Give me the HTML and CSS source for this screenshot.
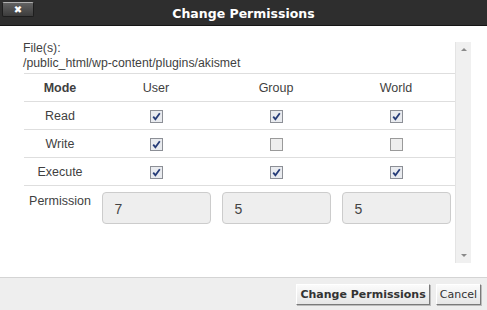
FILE: index.html
```html
<!DOCTYPE html>
<html lang="en">
<head>
    <meta charset="UTF-8">
    <title>Change Permissions</title>
    <link rel="stylesheet" href="styles.css">
</head>
<body>
    <div class="dialog">
        <div class="titlebar">
            <div class="close-wrap">
                <button class="close-btn" type="button">&#x2716;</button>
            </div>
            <div class="title">Change Permissions</div>
            <div></div>
        </div>

        <div class="content">
            <div class="scroll-area">
                <div class="files">
                    <div>File(s):</div>
                    <div>/public_html/wp-content/plugins/akismet</div>
                </div>

                <table class="perms">
                    <colgroup>
                        <col class="col-mode">
                        <col class="col-who">
                        <col class="col-who">
                        <col class="col-who">
                    </colgroup>
                    <tr>
                        <th>Mode</th>
                        <td>User</td>
                        <td>Group</td>
                        <td>World</td>
                    </tr>
                    <tr>
                        <td>Read</td>
                        <td><span class="cb on"><svg width="13" height="13" viewBox="0 0 13 13"><rect x="0.5" y="0.5" width="12" height="12" fill="#e9ebef" stroke="#8c8f96"/><path d="M3.2 6.6 L5.4 9.2 L9.8 3.2" fill="none" stroke="#263c78" stroke-width="1.8"/></svg></span></td>
                        <td><span class="cb on"><svg width="13" height="13" viewBox="0 0 13 13"><rect x="0.5" y="0.5" width="12" height="12" fill="#e9ebef" stroke="#8c8f96"/><path d="M3.2 6.6 L5.4 9.2 L9.8 3.2" fill="none" stroke="#263c78" stroke-width="1.8"/></svg></span></td>
                        <td><span class="cb on"><svg width="13" height="13" viewBox="0 0 13 13"><rect x="0.5" y="0.5" width="12" height="12" fill="#e9ebef" stroke="#8c8f96"/><path d="M3.2 6.6 L5.4 9.2 L9.8 3.2" fill="none" stroke="#263c78" stroke-width="1.8"/></svg></span></td>
                    </tr>
                    <tr>
                        <td>Write</td>
                        <td><span class="cb on"><svg width="13" height="13" viewBox="0 0 13 13"><rect x="0.5" y="0.5" width="12" height="12" fill="#e9ebef" stroke="#8c8f96"/><path d="M3.2 6.6 L5.4 9.2 L9.8 3.2" fill="none" stroke="#263c78" stroke-width="1.8"/></svg></span></td>
                        <td><span class="cb"><svg width="13" height="13" viewBox="0 0 13 13"><rect x="0.5" y="0.5" width="12" height="12" fill="#eeeeee" stroke="#9a9a9a"/></svg></span></td>
                        <td><span class="cb"><svg width="13" height="13" viewBox="0 0 13 13"><rect x="0.5" y="0.5" width="12" height="12" fill="#eeeeee" stroke="#9a9a9a"/></svg></span></td>
                    </tr>
                    <tr>
                        <td>Execute</td>
                        <td><span class="cb on"><svg width="13" height="13" viewBox="0 0 13 13"><rect x="0.5" y="0.5" width="12" height="12" fill="#e9ebef" stroke="#8c8f96"/><path d="M3.2 6.6 L5.4 9.2 L9.8 3.2" fill="none" stroke="#263c78" stroke-width="1.8"/></svg></span></td>
                        <td><span class="cb on"><svg width="13" height="13" viewBox="0 0 13 13"><rect x="0.5" y="0.5" width="12" height="12" fill="#e9ebef" stroke="#8c8f96"/><path d="M3.2 6.6 L5.4 9.2 L9.8 3.2" fill="none" stroke="#263c78" stroke-width="1.8"/></svg></span></td>
                        <td><span class="cb on"><svg width="13" height="13" viewBox="0 0 13 13"><rect x="0.5" y="0.5" width="12" height="12" fill="#e9ebef" stroke="#8c8f96"/><path d="M3.2 6.6 L5.4 9.2 L9.8 3.2" fill="none" stroke="#263c78" stroke-width="1.8"/></svg></span></td>
                    </tr>
                    <tr class="perm-row">
                        <td class="perm-label">Permission</td>
                        <td><div class="perm-box">7</div></td>
                        <td><div class="perm-box">5</div></td>
                        <td><div class="perm-box">5</div></td>
                    </tr>
                </table>
            </div>

            <div class="scrollbar">
                <span class="arrow up"></span>
                <span class="arrow down"></span>
            </div>
        </div>

        <div class="footer">
            <button type="button" class="btn btn-main">Change Permissions</button>
            <button type="button" class="btn">Cancel</button>
        </div>
    </div>
</body>
</html>
```

FILE: styles.css
```css
body {
    margin: 0;
    font-family: 'Liberation Sans', Arial, sans-serif;
    background: #ffffff;
}
.dialog {
    width: 487px;
    height: 310px;
    display: flex;
    flex-direction: column;
    overflow: hidden;
}
.titlebar {
    height: 25px;
    background: #2e2e2e;
    border-bottom: 1px solid #151515;
    display: grid;
    grid-template-columns: 1fr auto 1fr;
    align-items: center;
}
.close-wrap {
    align-self: start;
    padding: 2px 0 0 2px;
}
.close-btn {
    display: block;
    width: 32px;
    height: 15px;
    padding: 0;
    border: 1px solid #1e1e1e;
    border-top: 1px solid #b0b0b0;
    border-radius: 2px;
    background: linear-gradient(#626262, #3c3c3c);
    color: #ffffff;
    font-size: 10px;
    line-height: 13px;
    font-family: 'DejaVu Sans', sans-serif;
    font-weight: bold;
}
.title {
    color: #ffffff;
    font-family: 'DejaVu Sans', Verdana, sans-serif;
    font-weight: bold;
    font-size: 12.5px;
    padding-top: 2px;
}
.content {
    height: 251px;
    display: flex;
}
.scroll-area {
    width: 432px;
    padding: 15px 0 0 23px;
    color: #3f3f3f;
    font-size: 12.3px;
}
.files {
    line-height: 15px;
    margin-bottom: 2px;
}
.perms {
    margin-left: 1px;
    width: 432px;
    border-collapse: collapse;
    table-layout: fixed;
}
.col-mode {
    width: 72px;
}
.col-who {
    width: 120px;
}
.perms th,
.perms td {
    text-align: center;
    padding: 0;
    height: 27px;
    font-size: 12.5px;
    color: #3f3f3f;
}
.perms th {
    font-weight: bold;
}
.perms tr {
    border-top: 1px solid #dedede;
}
.cb {
    display: inline-block;
    height: 13px;
    vertical-align: middle;
}
.cb svg {
    display: block;
}
.perm-row td {
    vertical-align: top;
    padding-top: 6px;
}
.perm-label {
    padding-top: 8px !important;
}
.perm-box {
    margin: 0 auto;
    background: #eeeeee;
    border: 1px solid #cccccc;
    border-radius: 4px;
    text-align: left;
    padding-left: 12px;
    box-sizing: border-box;
    width: 109px;
    height: 32px;
    line-height: 32px;
    font-size: 14px;
    color: #444;
}
.scrollbar {
    width: 16px;
    margin: 16px 15px 14px 0;
    background: #f0f0f0;
    border-left: 1px solid #e4e4e4;
    display: flex;
    flex-direction: column;
    justify-content: space-between;
    align-items: center;
    padding: 6px 0;
    box-sizing: border-box;
}
.arrow {
    width: 0;
    height: 0;
    border-left: 3px solid transparent;
    border-right: 3px solid transparent;
}
.arrow.up {
    border-bottom: 3px solid #8a8a8a;
}
.arrow.down {
    border-top: 3px solid #8a8a8a;
}
.footer {
    flex: 1;
    background: #eeeeee;
    border-top: 1px solid #d4d4d4;
    display: flex;
    justify-content: flex-end;
    align-items: center;
    gap: 6px;
    padding-right: 6px;
}
.btn {
    font-family: 'DejaVu Sans', Verdana, sans-serif;
    font-size: 11px;
    color: #333333;
    height: 21px;
    padding: 0 3px;
    background: linear-gradient(#fbfbfb, #e6e6e6);
    border: 1px solid;
    border-color: #ffffff #7a7a7a #7a7a7a #ffffff;
    box-shadow: 1px 1px 0 #bcbcbc;
}
.btn-main {
    font-weight: bold;
}
```
